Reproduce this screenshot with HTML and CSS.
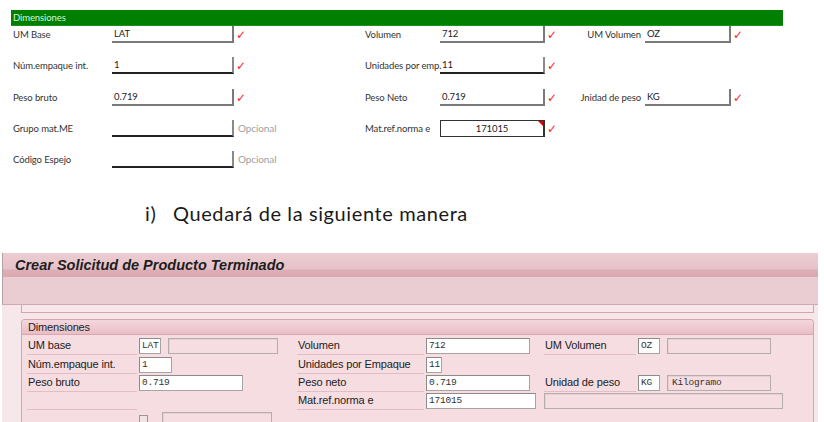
FILE: index.html
```html
<!DOCTYPE html>
<html lang="es">
<head>
<meta charset="utf-8">
<link rel="stylesheet" href="styles.css">
</head>
<body>
<div class="xl">
  <div class="xl-head">Dimensiones</div>
  <div class="xl-row">
    <span class="xl-lab c1">UM Base</span>
    <span class="xl-fld f1">LAT</span>
    <span class="xl-mark m1"><span class="chk">✓</span></span>
    <span class="xl-lab c2">Volumen</span>
    <span class="xl-fld f2">712</span>
    <span class="xl-mark m2"><span class="chk">✓</span></span>
    <span class="xl-lab c3">UM Volumen</span>
    <span class="xl-fld f3">OZ</span>
    <span class="xl-mark"><span class="chk">✓</span></span>
  </div>
  <div class="xl-row">
    <span class="xl-lab c1">Núm.empaque int.</span>
    <span class="xl-fld f1 dark">1</span>
    <span class="xl-mark m1"><span class="chk">✓</span></span>
    <span class="xl-lab c2">Unidades por emp.</span>
    <span class="xl-fld f2 dark">11</span>
    <span class="xl-mark m2"><span class="chk">✓</span></span>
  </div>
  <div class="xl-row">
    <span class="xl-lab c1">Peso bruto</span>
    <span class="xl-fld f1">0.719</span>
    <span class="xl-mark m1"><span class="chk">✓</span></span>
    <span class="xl-lab c2">Peso Neto</span>
    <span class="xl-fld f2">0.719</span>
    <span class="xl-mark m2"><span class="chk">✓</span></span>
    <span class="xl-lab c3">Jnidad de peso</span>
    <span class="xl-fld f3">KG</span>
    <span class="xl-mark"><span class="chk">✓</span></span>
  </div>
  <div class="xl-row">
    <span class="xl-lab c1">Grupo mat.ME</span>
    <span class="xl-fld f1 dark"></span>
    <span class="xl-mark m1"><span class="opt">Opcional</span></span>
    <span class="xl-lab c2">Mat.ref.norma e</span>
    <span class="xl-fld f2 boxed">171015<span class="note"></span></span>
    <span class="xl-mark m2"><span class="chk">✓</span></span>
  </div>
  <div class="xl-row">
    <span class="xl-lab c1">Código Espejo</span>
    <span class="xl-fld f1 dark"></span>
    <span class="xl-mark m1"><span class="opt">Opcional</span></span>
  </div>
</div>

<p class="step"><span class="step-num">i)</span><span>Quedará de la siguiente manera</span></p>

<div class="sap">
  <div class="sap-title">Crear Solicitud de Producto Terminado</div>
  <div class="sap-tool"></div>
  <div class="sap-body">
    <div class="prev-box"></div>
    <div class="grp">
      <div class="grp-head">Dimensiones</div>
      <div class="grp-body">
        <div class="srow">
          <span class="slab">UM base</span>
          <span class="sfld"><span class="inp w22">LAT</span><span class="disp w110"></span></span>
          <span class="slab">Volumen</span>
          <span class="sfld"><span class="inp w104">712</span></span>
          <span class="slab">UM Volumen</span>
          <span class="sfld"><span class="inp w22">OZ</span><span class="disp w104"></span></span>
        </div>
        <div class="srow">
          <span class="slab">Núm.empaque int.</span>
          <span class="sfld"><span class="inp w33">1</span></span>
          <span class="slab">Unidades por Empaque</span>
          <span class="sfld"><span class="inp w16">11</span></span>
        </div>
        <div class="srow">
          <span class="slab">Peso bruto</span>
          <span class="sfld"><span class="inp w104">0.719</span></span>
          <span class="slab">Peso neto</span>
          <span class="sfld"><span class="inp w104">0.719</span></span>
          <span class="slab">Unidad de peso</span>
          <span class="sfld"><span class="inp w22">KG</span><span class="disp w104">Kilogramo</span></span>
        </div>
        <div class="srow">
          <span class="slab"></span>
          <span class="sfld"></span>
          <span class="slab">Mat.ref.norma e</span>
          <span class="sfld"><span class="inp w110">171015</span></span>
          <span class="sfld span2"><span class="disp w239"></span></span>
        </div>
        <div class="srow">
          <span class="slab nol"></span>
          <span class="sfld gap14"><span class="cbox"></span><span class="disp w110"></span></span>
        </div>
      </div>
    </div>
  </div>
</div>
</body>
</html>
```

FILE: styles.css
```css
html, body {
  margin: 0;
  padding: 0;
  overflow: hidden;
  background: #ffffff;
}

/* ---------- Excel-like form ---------- */
.xl {
  padding-top: 10px;
  font-family: "Lato", "Liberation Sans", sans-serif;
  font-size: 9.5px;
  letter-spacing: -0.1px;
  color: #333;
}

.xl-head {
  margin-left: 11px;
  width: 772px;
  height: 16px;
  line-height: 16px;
  background: #007f00;
  color: #d9f2d9;
  padding-left: 2px;
  box-sizing: border-box;
  border-bottom: 1px solid #1d8f1d;
}

.xl-row {
  display: flex;
  align-items: flex-start;
  height: 31.3px;
  padding-left: 13px;
}

.xl-lab {
  line-height: 17px;
  height: 17px;
  white-space: nowrap;
}

.c1 { width: 99px; }
.c2 { width: 75px; }
.c3 {
  width: 80px;
  text-align: right;
  padding-right: 4px;
  box-sizing: border-box;
}

.xl-fld {
  position: relative;
  height: 17px;
  line-height: 16px;
  box-sizing: border-box;
  border-right: 2px solid #7a7a7a;
  border-bottom: 2px solid #7a7a7a;
  padding-left: 2px;
  color: #222;
}

.xl-fld.dark {
  border-bottom: 2px solid #222;
  border-right-color: #8a8a8a;
}

.xl-fld.boxed {
  border: 1px solid #333;
  border-right: 2px solid #333;
  text-align: center;
  padding-left: 0;
  line-height: 15px;
}

.note {
  position: absolute;
  top: 0;
  right: 0;
  width: 0;
  height: 0;
  border-top: 5px solid #e00000;
  border-left: 5px solid transparent;
}

.f1 { width: 122px; }
.f2 { width: 105px; }
.f3 { width: 86px; }

.xl-mark {
  line-height: 17px;
  height: 17px;
}

.m1 { width: 131px; }
.m2 { width: 20px; }

.chk {
  display: inline-block;
  padding-left: 2px;
  color: #ff2020;
  font-family: "DejaVu Sans", sans-serif;
  font-size: 12px;
  line-height: 17px;
  transform: translateY(1px);
}

.opt {
  padding-left: 4px;
  color: #a0a0a0;
  font-size: 10px;
}

/* ---------- instruction ---------- */
.step {
  margin: 19px 0 0 0;
  padding-left: 145px;
  font-family: "Lato", "Open Sans", sans-serif;
  font-size: 20px;
  letter-spacing: 0.6px;
  line-height: 24px;
  color: #1a1a1a;
  display: flex;
}

.step-num {
  width: 28px;
}

/* ---------- SAP screen ---------- */
.sap {
  margin-top: 28px;
  margin-left: 2px;
  width: 816px;
  font-family: "Liberation Sans", "DejaVu Sans", sans-serif;
  font-size: 11px;
  letter-spacing: -0.15px;
  color: #222;
}

.sap-title {
  height: 24px;
  box-sizing: border-box;
  padding: 3px 0 0 12px;
  background: linear-gradient(to bottom, #ebcdd2 0%, #e6c2c9 65%, #dcaeb6 72%, #d9a9b2 100%);
  border-left: 1px solid #b7a0a5;
  font-size: 14.5px;
  letter-spacing: 0;
  font-weight: bold;
  font-style: italic;
  color: #1e1e1e;
  line-height: 18px;
}

.sap-tool {
  height: 28px;
  box-sizing: border-box;
  background: #eacdd3;
  border-left: 1px solid #b7a0a5;
  border-bottom: 1px solid #d3a7af;
}

.sap-body {
  background: #f6e7ea;
  padding: 0 4px 0 19px;
  height: 140px;
}

.prev-box {
  height: 8px;
  box-sizing: border-box;
  border: 1px solid #d9a3ad;
  border-top: none;
}

.grp {
  margin-top: 6px;
  border: 1px solid #d9a3ad;
  border-bottom: none;
  border-radius: 4px 4px 0 0;
  overflow: hidden;
}

.grp-head {
  height: 15px;
  line-height: 15px;
  box-sizing: border-box;
  padding-left: 6px;
  background: linear-gradient(to bottom, #f3d7dc, #e9bec6);
  border-bottom: 1px solid #dca5af;
  color: #222;
}

.grp-body {
  background: #f5dde1;
  padding: 2px 0 0 5px;
  height: 120px;
}

.srow {
  display: grid;
  grid-template-columns: 112px 158px 129px 118px 94px 1fr;
  height: 18.3px;
  align-items: start;
}

.slab {
  height: 17px;
  line-height: 17px;
  margin-right: 2px;
  padding-left: 1px;
  border-bottom: 1px solid #e4bcc3;
  white-space: nowrap;
}

.slab.nol {
  border-bottom: none;
}

.sfld {
  display: flex;
  gap: 7px;
  margin-top: 1px;
}

.sfld.gap14 {
  gap: 14px;
}

.sfld.span2 {
  grid-column: span 2;
}

.inp {
  height: 16px;
  box-sizing: border-box;
  background: #ffffff;
  border: 1px solid #a8a4a5;
  border-top-color: #8e8a8b;
  border-left-color: #8e8a8b;
  padding-left: 2px;
  font-family: "Liberation Mono", "DejaVu Sans Mono", monospace;
  font-size: 9.5px;
  letter-spacing: -0.2px;
  line-height: 14px;
  color: #333;
}

.disp {
  height: 16px;
  box-sizing: border-box;
  border: 1px solid #b4adae;
  box-shadow: inset 1px 1px 0 #e7d0d4;
  padding-left: 4px;
  font-family: "Liberation Mono", "DejaVu Sans Mono", monospace;
  font-size: 9.5px;
  letter-spacing: -0.2px;
  line-height: 14px;
  color: #333;
}

.cbox {
  width: 9px;
  height: 9px;
  margin-top: 3px;
  box-sizing: border-box;
  border: 1px solid #9b9698;
  background: #f0e2e5;
}

.w16 { width: 16px; }
.w22 { width: 22px; }
.w33 { width: 33px; }
.w104 { width: 104px; }
.w110 { width: 110px; }
.w239 { width: 239px; }
```
